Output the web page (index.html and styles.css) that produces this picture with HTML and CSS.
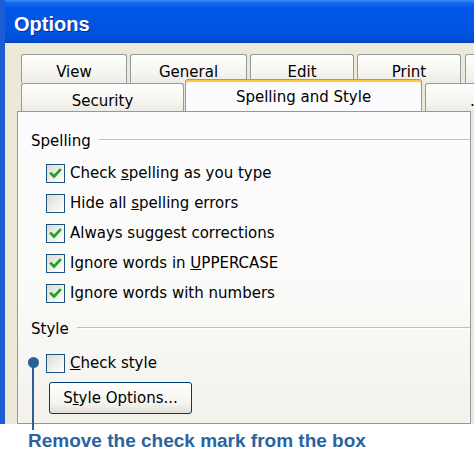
FILE: index.html
```html
<!DOCTYPE html>
<html>
<head>
<meta charset="utf-8">
<title>Options</title>
<link rel="stylesheet" href="styles.css">
</head>
<body>
<div class="window">
  <div class="titlebar"><span class="title">Options</span></div>
  <div class="client">
    <div class="tabrow back">
      <div class="tab t-view">View</div>
      <div class="tab t-general">General</div>
      <div class="tab t-edit">Edit</div>
      <div class="tab t-print">Print</div>
      <div class="tab t-more"></div>
    </div>
    <div class="tabrow front">
      <div class="tab t-security">Security</div>
      <div class="tab selected">Spelling and Style</div>
      <div class="tab t-more2"><span class="cut">.</span></div>
    </div>
    <div class="pane">
      <div class="legend"><span>Spelling</span><span class="rule"></span></div>
      <div class="checks">
        <div class="check"><span class="box on"><svg viewBox="0 0 17 17" width="17" height="17"><polyline points="4,8.5 7,11.5 13,5" /></svg></span><span>Check <u>s</u>pelling as you type</span></div>
        <div class="check"><span class="box"></span><span>Hide all <u>s</u>pelling errors</span></div>
        <div class="check"><span class="box on"><svg viewBox="0 0 17 17" width="17" height="17"><polyline points="4,8.5 7,11.5 13,5" /></svg></span><span>Always suggest corrections</span></div>
        <div class="check"><span class="box on"><svg viewBox="0 0 17 17" width="17" height="17"><polyline points="4,8.5 7,11.5 13,5" /></svg></span><span>Ignore words in <u>U</u>PPERCASE</span></div>
        <div class="check"><span class="box on"><svg viewBox="0 0 17 17" width="17" height="17"><polyline points="4,8.5 7,11.5 13,5" /></svg></span><span>Ignore words with numbers</span></div>
      </div>
      <div class="legend style-legend"><span>Style</span><span class="rule"></span></div>
      <div class="checks style-checks">
        <div class="check"><span class="box"></span><span><u>C</u>heck style</span></div>
        <button class="btn">S<u>t</u>yle Options...</button>
      </div>
    </div>
  </div>
</div>
<div class="caption">Remove the check mark from the box</div>
<span class="pin-dot"></span>
<span class="pin-line"></span>
</body>
</html>
```

FILE: styles.css
```css
* { box-sizing: border-box; }

html, body {
  margin: 0;
  padding: 0;
  background: #ffffff;
}

body {
  width: 474px;
  height: 458px;
  overflow: hidden;
  font-family: "DejaVu Sans", sans-serif;
  color: #000;
}

.window {
  height: 424px;
  border-left: 5px solid #1D5CD4;
  display: flex;
  flex-direction: column;
  overflow: hidden;
  background: #ECE9D8;
}

.titlebar {
  flex: none;
  height: 43px;
  margin-left: -5px;
  padding: 6px 0 0 14px;
  display: flex;
  align-items: center;
  background: linear-gradient(#3C8CF6 0, #1466EE 3px, #0258E6 8px, #0055E3 50%, #0052DC 85%, #0046C4 100%);
}

.title {
  font-family: "Liberation Sans", sans-serif;
  font-weight: bold;
  font-size: 20px;
  color: #ffffff;
  text-shadow: 1px 1px 0 #0B2A9A;
}

.client {
  flex: 1;
  min-height: 0;
  display: flex;
  flex-direction: column;
  padding: 11px 3px 0 12px;
}

.tabrow {
  flex: none;
  display: flex;
  padding-left: 4px;
}

.tab {
  flex: none;
  display: flex;
  align-items: center;
  justify-content: center;
  border: 1px solid #919B9C;
  border-bottom: none;
  border-radius: 3px 3px 0 0;
  background: linear-gradient(#FEFEFE, #F6F5F1 60%, #ECEBE5);
  font-size: 15px;
  white-space: nowrap;
  overflow: hidden;
}

.back { height: 29px; gap: 3px; }
.back .tab { height: 29px; padding-top: 5px; }
.t-view { width: 106px; }
.t-general { width: 117px; }
.t-edit { width: 104px; }
.t-print { width: 104px; margin-right: 1px; }
.t-more { width: 60px; }

.front { height: 28px; }
.front .tab { height: 28px; padding-top: 6px; }
.t-security { width: 163px; }
.tab.selected {
  width: 237px;
  height: 33px;
  margin: -4px 3px -1px 1px;
  padding-top: 2px;
  background: #FCFCFE;
  border-top: 1px solid #E68B2C;
  box-shadow: inset 0 2px 0 #FFC73C;
}
.t-more2 {
  width: 60px;
  justify-content: flex-start;
  padding-left: 44px;
}

.pane {
  flex: 1;
  border: 1px solid #919B9C;
  background: linear-gradient(#FCFCFE 0%, #FAFAF8 60%, #F2F1EC 100%);
  padding: 20px 0 0 13px;
}

.legend {
  display: flex;
  align-items: center;
  gap: 8px;
  height: 18px;
  font-size: 15px;
}

.rule {
  flex: 1;
  height: 2px;
  margin-top: -3px;
  border-top: 1px solid #C3C1B6;
  border-bottom: 1px solid #FFFFFF;
}

.checks {
  padding-left: 15px;
  margin-top: 8px;
}

.check {
  height: 30px;
  display: flex;
  align-items: center;
  gap: 5px;
  font-size: 15px;
}

.box {
  flex: none;
  width: 19px;
  height: 19px;
  border: 1px solid #1C5180;
  background: linear-gradient(135deg, #DCDCD5 0%, #F0F0EC 55%, #FFFFFF 100%);
  display: flex;
  align-items: center;
  justify-content: center;
}

.box svg polyline {
  fill: none;
  stroke: #21A121;
  stroke-width: 2.6;
  stroke-linecap: square;
}

.style-legend { margin-top: 12px; }
.style-checks { margin-top: 10px; }

.btn {
  display: block;
  margin: 4px 0 0 3px;
  width: 143px;
  height: 32px;
  border: 1px solid #003C74;
  border-radius: 3px;
  background: linear-gradient(#FFFFFF, #F4F3EE 70%, #DEDDD6);
  font-family: inherit;
  font-size: 15px;
  color: #000;
  padding: 0;
}

.caption {
  margin-top: 6px;
  padding-left: 28px;
  font-family: "Liberation Sans", sans-serif;
  font-weight: bold;
  font-size: 19px;
  line-height: 22px;
  color: #2B63A0;
}

.pin-dot {
  position: absolute;
  left: 28px;
  top: 357px;
  width: 11px;
  height: 11px;
  border-radius: 50%;
  background: #2B5F98;
}

.pin-line {
  position: absolute;
  left: 32px;
  top: 362px;
  width: 2px;
  height: 68px;
  background: #2B5F98;
}
```
